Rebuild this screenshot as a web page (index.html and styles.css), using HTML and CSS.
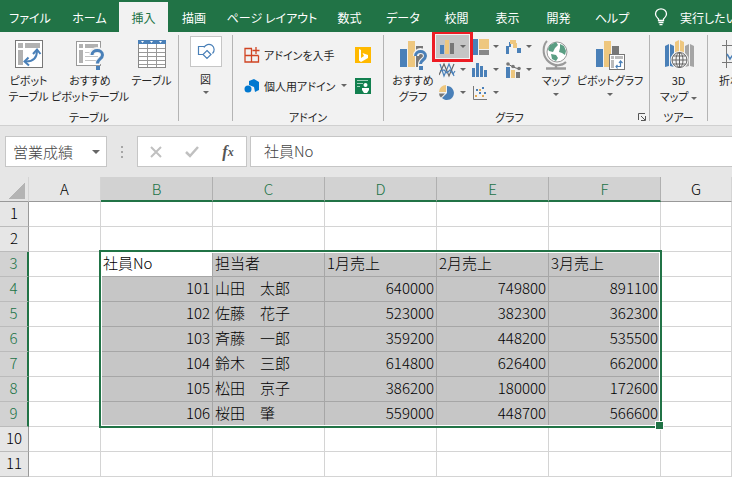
FILE: index.html
```html
<!DOCTYPE html>
<html lang="ja">

<head>
    <meta charset="UTF-8">
    <meta name="viewport" content="width=device-width, initial-scale=1.0">
    <title>営業成績</title>
    <link rel="stylesheet" href="styles.css">
</head>

<body>
    <nav class="tabs">
        <a href="#">ファイル</a>
        <a href="#">ホーム</a>
        <a href="#" class="active">挿入</a>
        <a href="#">描画</a>
        <a href="#">ページ レイアウト</a>
        <a href="#">数式</a>
        <a href="#">データ</a>
        <a href="#">校閲</a>
        <a href="#">表示</a>
        <a href="#">開発</a>
        <a href="#">ヘルプ</a>
        <a href="#" class="tell-me">
            <svg width="14" height="18" viewBox="0 0 14 18" fill="none" stroke="#fff" stroke-width="1.3">
                <path d="M4.5 12.5V11C3 9.500 1.500 8.500 1.500 6a5.500 5.200 0 0 1 11 0C12.500 8.500 11 9.500 9.500 11v1.500zM4.500 14.500h5M5.500 16.700h3" />
            </svg>
            実行したい
        </a>
    </nav>

    <div class="ribbon">
        <div class="group group-tables">
            <div class="tools">
                <button class="big">
                    <svg width="30" height="30" viewBox="0 0 30 30">
                        <rect x="1.500" y=".5" width="27" height="27" fill="#fff" stroke="#777" />
                        <path d="M4 3h5v5H4zM11 3h15v5H11zM4 10h5v15H4z" fill="#b1b1b1" />
                        <path d="M12 21.500c7 0 11-4 11-11" fill="none" stroke="#4a80b8" stroke-width="2" />
                        <path d="M19 14l4-4.500 3.500 4.500M14.500 17.500L10.500 21.500l4.500 4" fill="none" stroke="#4a80b8" stroke-width="2" />
                    </svg>
                    <span>ピボット<br>テーブル</span>
                </button>
                <button class="big wide">
                    <svg width="30" height="30" viewBox="0 0 30 30">
                        <rect x="1.500" y="1.500" width="24" height="24" fill="#fff" stroke="#999" />
                        <path d="M4 4h4v4H4zM10 4h13v4H10zM4 10h4v13H4z" fill="#b1b1b1" />
                        <path d="M10 12.500h13M10 16.500h13M10 20.500h13" stroke="#c4c4c4" />
                        <path d="M17 15c0-7 11-6 11 0 0 4-5 4-5 9" fill="none" stroke="#f2f2f2" stroke-width="6" />
                        <path d="M17 15c0-6 10.500-6 10.500 0 0 4-5 4-5 8.500" fill="none" stroke="#4a80b8" stroke-width="3" />
                        <path d="M21 26h4v4h-4z" fill="#4a80b8" />
                    </svg>
                    <span>おすすめ<br>ピボットテーブル</span>
                </button>
                <button class="big">
                    <svg width="30" height="30" viewBox="0 0 30 30">
                        <rect x="1.500" y=".5" width="27" height="27" fill="#fff" stroke="#888" />
                        <path d="M1 0h28v4H1z" fill="#4a80b8" />
                        <path d="M4 1h3L5.500 3zM13 1h3L14.500 3zM22 1h3L23.500 3z" fill="#fff" />
                        <path d="M2 8.500h26M2 12.500h26M2 16.500h26M2 20.500h26M2 24.500h26M10.500 4v23M19.500 4v23" stroke="#999" />
                    </svg>
                    <span>テーブル</span>
                </button>
            </div>
            <div class="caption">テーブル</div>
        </div>

        <div class="group group-shapes">
            <button class="shapes">
                <span class="shape-box">
                    <svg width="18" height="18" viewBox="0 0 18 18" fill="none" stroke="#4a80b8" stroke-width="1.200">
                        <path d="M8 3.500H1.500v8H6M7 4.500a5.300 5.300 0 1 1 8.500 6M10 7.500l4 4-4 4-4-4z" />
                    </svg>
                </span>
                <span>図</span>
                <i class="caret"></i>
            </button>
        </div>

        <div class="group group-addins">
            <div class="addins">
                <button>
                    <svg width="16" height="16" viewBox="0 0 16 16" fill="none" stroke="#d04423" stroke-width="1.300">
                        <path d="M8 1.500H1V15h13.500V8.500M1 8.500h13.500M7.500 1.500V15M12 0v7M8.500 3.500h7" />
                    </svg>
                    アドインを入手
                </button>
                <button aria-label="Bing">
                    <svg width="16" height="16" viewBox="0 0 16 16">
                        <path d="M0 0h16v16H0z" fill="#ffb900" />
                        <path d="M4 2l2 1v8l3-2-1.500-3L13 8v3l-7 4-2-1.500z" fill="#fff" />
                    </svg>
                </button>
                <button>
                    <svg width="16" height="16" viewBox="0 0 16 16" fill="#0078d0">
                        <path d="M5 3l5-2 5 3v8l-4 2-1-5-5-2z" />
                        <circle cx="4" cy="11" r="3.500" />
                    </svg>
                    個人用アドイン
                    <i class="caret"></i>
                </button>
                <button aria-label="People Graph">
                    <svg width="16" height="16" viewBox="0 0 16 16">
                        <path d="M0 0h16v16H0z" fill="#12804f" />
                        <path d="M2 2.500h11M2 5.500h6M2 8.500h3" stroke="#9fd0b9" />
                        <circle cx="10.500" cy="7" r="2" fill="#fff" />
                        <path d="M7 10h7v2l-2 3H9l-2-3z" fill="#fff" />
                    </svg>
                </button>
            </div>
            <div class="caption">アドイン</div>
        </div>

        <div class="group group-charts">
            <div class="tools">
                <button class="big suggest">
                    <svg width="30" height="30" viewBox="0 0 30 30">
                        <path d="M2 9h7v18H2z" fill="#4a80b8" />
                        <path d="M10 1h7v26h-7z" fill="#eec77f" />
                        <path d="M18 6h7v21h-7z" fill="#777" />
                        <path d="M18 16c0-7 10-6 10 0 0 4-5 4-5 8v6" fill="none" stroke="#f2f2f2" stroke-width="6" />
                        <path d="M17.500 16c0-6 10-6 10 0 0 4-5 4-5 8" fill="none" stroke="#4a80b8" stroke-width="3" />
                        <path d="M21 26h4v4h-4z" fill="#4a80b8" />
                    </svg>
                    <span>おすすめ<br>グラフ</span>
                </button>
                <div class="gallery">
                    <button class="selected" aria-label="縦棒">
                        <svg width="17" height="16" viewBox="0 0 17 16">
                            <path d="M1 6h4v9H1z" fill="#4a80b8" />
                            <path d="M6 1h4v14H6z" fill="#eec77f" />
                            <path d="M11 4h4v11h-4z" fill="#777" />
                        </svg>
                        <i class="caret"></i>
                    </button>
                    <button aria-label="階層構造">
                        <svg width="17" height="16" viewBox="0 0 17 16">
                            <path d="M0 0h6v16H0z" fill="#4a80b8" />
                            <path d="M7 0h10v10H7z" fill="#eec77f" />
                            <path d="M7 11h10v5H7z" fill="#888" />
                        </svg>
                        <i class="caret"></i>
                    </button>
                    <button aria-label="ウォーターフォール">
                        <svg width="17" height="16" viewBox="0 0 17 16">
                            <path d="M1 7h3v8H1zM4 3h2v5H4zM12 9h4v5h-4z" fill="#4a80b8" />
                            <path d="M5 1h6v4H5zM8 4h4v5H8z" fill="#eec77f" />
                        </svg>
                        <i class="caret"></i>
                    </button>
                    <button aria-label="折れ線">
                        <svg width="17" height="16" viewBox="0 0 17 16" fill="none" stroke-width="1.200">
                            <path d="M1 2l4 12 5-12 5 12" stroke="#4a80b8" />
                            <path d="M0 13L5 2l5 12 5-12" stroke="#666" />
                            <path d="M1 9l4-1 3 3 3-3 3 4 2-3" stroke="#4a80b8" />
                        </svg>
                        <i class="caret"></i>
                    </button>
                    <button aria-label="統計">
                        <svg width="17" height="16" viewBox="0 0 17 16" fill="#4a80b8">
                            <path d="M0 6h3v9H0zM4 1h3v14H4zM8 4h3v11H8zM12 8h3v7h-3z" />
                        </svg>
                        <i class="caret"></i>
                    </button>
                    <button aria-label="組み合わせ">
                        <svg width="17" height="16" viewBox="0 0 17 16">
                            <path d="M1 5h4v11H1z" fill="#4a80b8" />
                            <path d="M6 8h4v8H6z" fill="#eec77f" />
                            <path d="M11 10h4v6h-4z" fill="#777" />
                            <path d="M3 2l5 3 6 2" fill="none" stroke="#666" />
                            <g fill="#777"><circle cx="3" cy="2" r="1.800" /><circle cx="8" cy="4.500" r="1.800" /><circle cx="14" cy="6.500" r="1.800" /></g>
                        </svg>
                        <i class="caret"></i>
                    </button>
                    <button aria-label="円">
                        <svg width="17" height="16" viewBox="0 0 17 16">
                            <path d="M8 1v7l-5 5A7 7 0 1 0 8 1" fill="#4a80b8" />
                            <path d="M7 0v7H0A7 7 0 0 1 7 0" fill="#eec77f" />
                            <path d="M0 8.500h6L2 12.500q-2-2-2-4" fill="#777" />
                        </svg>
                        <i class="caret"></i>
                    </button>
                    <button aria-label="散布図">
                        <svg width="17" height="16" viewBox="0 0 17 16">
                            <path d="M1.500 1v13.500H15" fill="none" stroke="#777" />
                            <path d="M4 4h2v2H4zM10 2h2v2h-2zM7 7h2v2H7zM12 7h2v2h-2z" fill="#4a80b8" />
                            <path d="M3 10h2v2H3zM7 4h2v2H7zM10 10h2v2h-2z" fill="#e3a955" />
                        </svg>
                        <i class="caret"></i>
                    </button>
                </div>
                <button class="big map">
                    <svg width="30" height="30" viewBox="0 0 30 30">
                        <path d="M6 1C2 5 1 14 6 20s14 7 19 2" fill="none" stroke="#999" stroke-width="2" />
                        <path d="M15 24v4M5 28.500h20" stroke="#999" stroke-width="2.500" />
                        <circle cx="16" cy="12" r="10" fill="#fff" stroke="#999" />
                        <path d="M9 5l6-3 2 3-3 3-2 4-4-1-1-2zM19 4l4 2 2 5-1 4-3-2-3-1 1-4zM10 14l5 1 2 3-2 3-4-2z" fill="#5a9e83" />
                    </svg>
                    <span>マップ</span>
                    <i class="caret"></i>
                </button>
                <button class="big pivot-chart">
                    <svg width="30" height="30" viewBox="0 0 30 30">
                        <path d="M1 9h7v18H1z" fill="#4a80b8" />
                        <path d="M9 1h7v26H9z" fill="#eec77f" />
                        <path d="M17 6h7v8h-7z" fill="#777" />
                        <rect x="14.500" y="14.500" width="15" height="15" fill="#fff" stroke="#777" />
                        <path d="M16 16h3v3h-3zM20 16h8v3h-8zM16 20h3v8h-3z" fill="#bbb" />
                        <path d="M21 26.500h4.500v-5M24 23l1.500-2 2 2M22.500 25L21 26.500l1.500 2" fill="none" stroke="#4a80b8" stroke-width="1.200" />
                    </svg>
                    <span>ピボットグラフ</span>
                    <i class="caret"></i>
                </button>
            </div>
            <div class="caption">
                グラフ
                <button class="launcher" aria-label="グラフの詳細">
                    <svg width="8" height="8" viewBox="0 0 8 8" fill="none" stroke="#555">
                        <path d="M.5 7V.500H7M3 3l4 4M7.500 3v4.500H3" />
                    </svg>
                </button>
            </div>
        </div>

        <div class="group group-tours">
            <div class="tools">
                <button class="big">
                    <svg width="30" height="30" viewBox="0 0 30 30">
                        <path d="M1 6l4-2v22l-4 1zM6 4l4 2v21l-4-1z" fill="#4a80b8" />
                        <path d="M11 2l4-2v26h-4zM16 0l4 2v24h-4z" fill="#eec77f" />
                        <path d="M21 6l4-2v22l-4 1zM26 4l4 2v21l-4-1z" fill="#a5a5a5" />
                        <circle cx="15.500" cy="20" r="9" fill="#f2f2f2" />
                        <g fill="none" stroke="#666"><circle cx="15.500" cy="20" r="7.500" /><ellipse cx="15.500" cy="20" rx="3.500" ry="7.500" /><path d="M15.500 12v16M8 20h15M9.500 16h12M9.500 24h12" /></g>
                    </svg>
                    <span>3D<br>マップ <i class="caret"></i></span>
                </button>
            </div>
            <div class="caption">ツアー</div>
        </div>

        <div class="group group-sparklines">
            <button class="big">
                <svg width="30" height="30" viewBox="0 0 30 30" fill="none">
                    <path d="M5.500 0v28M1 5.500h29M1 22.500h29" stroke="#777" />
                    <path d="M6 14l3 5 6-9 5 8 6-5" stroke="#4a80b8" stroke-width="1.500" />
                </svg>
                <span>折れ線</span>
            </button>
        </div>
    </div>

    <div class="formula-bar">
        <div class="name-box">
            <input type="text" value="営業成績" aria-label="名前ボックス">
            <button aria-label="名前の一覧"><i class="caret"></i></button>
        </div>
        <div class="dots"><i></i><i></i><i></i></div>
        <div class="formula-buttons">
            <button aria-label="キャンセル">
                <svg width="12" height="12" viewBox="0 0 12 12" stroke="#c0c0c0" stroke-width="2"><path d="M1 1l10 10M11 1L1 11" /></svg>
            </button>
            <button aria-label="入力">
                <svg width="14" height="12" viewBox="0 0 14 12" fill="none" stroke="#c0c0c0" stroke-width="2.500"><path d="M1 6l4 4 8-9" /></svg>
            </button>
            <button class="fx" aria-label="関数の挿入">f<small>x</small></button>
        </div>
        <input type="text" class="formula" value="社員No" aria-label="数式バー">
    </div>

    <main class="sheet">
        <table>
            <colgroup>
                <col class="col-num">
                <col class="col-a">
                <col class="col-data" span="5">
                <col>
            </colgroup>
            <thead>
                <tr>
                    <th class="corner"></th>
                    <th>A</th>
                    <th class="on">B</th>
                    <th class="on">C</th>
                    <th class="on">D</th>
                    <th class="on">E</th>
                    <th class="on">F</th>
                    <th>G</th>
                </tr>
            </thead>
            <tbody>
                <tr><th>1</th><td></td><td></td><td></td><td></td><td></td><td></td><td></td></tr>
                <tr><th>2</th><td></td><td></td><td></td><td></td><td></td><td></td><td></td></tr>
                <tr class="picked titles"><th>3</th><td></td><td class="current">社員No</td><td>担当者</td><td>1月売上</td><td>2月売上</td><td>3月売上</td><td></td></tr>
                <tr class="picked"><th>4</th><td></td><td>101</td><td>山田　太郎</td><td>640000</td><td>749800</td><td>891100</td><td></td></tr>
                <tr class="picked"><th>5</th><td></td><td>102</td><td>佐藤　花子</td><td>523000</td><td>382300</td><td>362300</td><td></td></tr>
                <tr class="picked"><th>6</th><td></td><td>103</td><td>斉藤　一郎</td><td>359200</td><td>448200</td><td>535500</td><td></td></tr>
                <tr class="picked"><th>7</th><td></td><td>104</td><td>鈴木　三郎</td><td>614800</td><td>626400</td><td>662000</td><td></td></tr>
                <tr class="picked"><th>8</th><td></td><td>105</td><td>松田　京子</td><td>386200</td><td>180000</td><td>172600</td><td></td></tr>
                <tr class="picked"><th>9</th><td></td><td>106</td><td>桜田　肇</td><td>559000</td><td>448700</td><td>566600</td><td></td></tr>
                <tr><th>10</th><td></td><td></td><td></td><td></td><td></td><td></td><td></td></tr>
                <tr><th>11</th><td></td><td></td><td></td><td></td><td></td><td></td><td></td></tr>
            </tbody>
        </table>
        <div class="selection"></div>
    </main>
</body>

</html>
```
FILE: styles.css
```css
* {
    box-sizing: border-box;
}

body {
    margin: 0;
    min-height: 100vh;
    display: flex;
    flex-direction: column;
    overflow: hidden;
    background: #fff;
    color: #262626;
    font-family: "Noto Sans CJK JP", sans-serif;
    font-size: 12px;
}

button,
input {
    margin: 0;
    padding: 0;
    border: none;
    background: none;
    color: inherit;
    font: inherit;
}

svg {
    display: block;
    flex: none;
}

.caret {
    display: inline-block;
    flex: none;
    border: 3px solid transparent;
    border-top-color: #666;
    border-bottom: none;
}

/* tabs */
.tabs {
    display: grid;
    grid-template-columns: 60px 59px 49px 52px 104px 51px 56px 51px 51px 51px 56px 1fr;
    height: 32px;
    padding-top: 2px;
    overflow: hidden;
    background: #217346;
    font-feature-settings: "palt";
}

.tabs a {
    display: flex;
    align-items: center;
    justify-content: center;
    color: #fff;
    text-decoration: none;
    white-space: nowrap;
}

.tabs .active {
    background: #f2f2f2;
    color: #217346;
}

.tabs .tell-me {
    justify-content: flex-start;
    gap: 12px;
    padding-left: 14px;
}

/* ribbon */
.ribbon {
    display: flex;
    height: 94px;
    padding: 3px 0 4px;
    overflow: hidden;
    background: #f2f2f2;
    border-bottom: 1px solid #d0d0d0;
    font-size: 11px;
    font-feature-settings: "palt";
}

.group {
    display: flex;
    flex: none;
    flex-direction: column;
    justify-content: space-between;
    border-right: 1px solid #b4b4b4;
}

.group-tables {
    width: 179px;
}

.group-shapes {
    width: 54px;
}

.group-addins {
    width: 151px;
}

.group-charts {
    width: 266px;
    padding-left: 6px;
}

.group-tours {
    width: 58px;
}

.group-sparklines {
    flex: 1 0 24px;
    padding-left: 11px;
    border: none;
}

.tools {
    display: flex;
}

.big {
    display: flex;
    flex: none;
    flex-direction: column;
    align-items: center;
    gap: 2px;
    width: 57px;
    padding-top: 5px;
    line-height: 16px;
    white-space: nowrap;
}

.big.wide {
    width: 66px;
}

.big.suggest {
    width: 46px;
}

.big.map {
    width: 42px;
}

.big.pivot-chart {
    width: 66px;
}

.big .caret {
    margin-top: 3px;
}

.big span .caret {
    margin-top: 0;
    vertical-align: middle;
}

.group-sparklines .big {
    width: auto;
    align-self: flex-start;
}

.caption {
    position: relative;
    height: 12px;
    line-height: 16px;
    text-align: center;
}

.group-charts .caption {
    padding-right: 20px;
}

.launcher {
    position: absolute;
    right: 3px;
    bottom: 0;
}

.shapes {
    display: flex;
    flex-direction: column;
    align-items: center;
    gap: 4px;
    padding-top: 1px;
    line-height: 16px;
}

.shape-box {
    display: flex;
    align-items: center;
    justify-content: center;
    width: 32px;
    height: 31px;
    background: #fff;
    border: 1px solid #c6c6c6;
}

.addins {
    display: grid;
    grid-template-columns: 1fr 28px;
    grid-auto-rows: 31px;
    padding: 4px 0 0 11px;
}

.addins button {
    display: flex;
    align-items: center;
    gap: 4px;
    white-space: nowrap;
}

.addins .caret {
    margin-left: auto;
    margin-right: 8px;
}

.gallery {
    display: grid;
    flex: none;
    grid-template-columns: repeat(3, 33px);
    grid-auto-rows: 23px;
}

.gallery button {
    display: flex;
    align-items: center;
    justify-content: center;
    gap: 4px;
}

.gallery .selected {
    position: relative;
    background: #c5c5c5;
}

.gallery .selected::after {
    content: "";
    position: absolute;
    inset: -4px;
    border: 3px solid #ed1c24;
}

/* formula bar */
.formula-bar {
    display: flex;
    height: 51px;
    padding: 10px 0;
    background: #e6e6e6;
    color: #444;
    font-size: 15px;
    font-weight: 300;
}

.name-box,
.formula-buttons,
.formula {
    height: 31px;
    background: #fff;
    border: 1px solid #c6c6c6;
}

.name-box {
    display: flex;
    width: 102px;
    margin-left: 5px;
}

.name-box input {
    flex: 1;
    min-width: 0;
    padding-left: 7px;
}

.name-box button {
    display: flex;
    align-items: center;
    padding: 0 6px;
}

.name-box .caret {
    border-width: 4px;
    border-bottom: none;
}

.dots {
    display: flex;
    flex-direction: column;
    align-items: center;
    justify-content: center;
    gap: 3px;
    width: 30px;
}

.dots i {
    width: 2px;
    height: 2px;
    background: #a6a6a6;
}

.formula-buttons {
    display: grid;
    grid-template-columns: repeat(3, 36px);
    width: 110px;
    margin-right: 3px;
}

.formula-buttons button {
    display: flex;
    align-items: center;
    justify-content: center;
}

.formula-buttons .fx {
    color: #555;
    font: italic bold 16px "Liberation Serif", serif;
}

.fx small {
    padding-top: 2px;
    font-size: 12px;
}

.formula {
    flex: 1;
    min-width: 0;
    padding: 0 0 2px 13px;
    border-right: none;
}

/* sheet */
.sheet {
    position: relative;
    flex: 1;
    overflow: hidden;
}

table {
    width: 100%;
    min-width: 720px;
    table-layout: fixed;
    border-collapse: separate;
    border-spacing: 0;
    color: #000;
    font-size: 15px;
    font-weight: 300;
    line-height: 22px;
}

.col-num {
    width: 29px;
}

.col-a {
    width: 72px;
}

.col-data {
    width: 112px;
}

th,
td {
    height: 25px;
    padding: 0 2px 2px;
    border-right: 1px solid #d4d4d4;
    border-bottom: 1px solid #d4d4d4;
    text-align: right;
    white-space: nowrap;
}

th {
    padding: 0 0 2px;
    background: #e6e6e6;
    font-weight: 300;
    text-align: center;
}

thead th {
    padding: 0;
    border-bottom-color: #999;
}

tbody th {
    border-right-color: #999;
    border-bottom-color: #bbb;
}

.corner {
    background: linear-gradient(135deg, #e6e6e6 50%, #b4b4b4 50%) 8px 5px / 17px 17px no-repeat #e6e6e6;
}

thead .on {
    background: #d2d2d2;
    border-right-color: #b0b0b0;
    border-bottom: 2px solid #217346;
    color: #217346;
}

.picked th {
    background: #d2d2d2;
    border-right: 2px solid #217346;
    color: #217346;
}

.picked td:nth-child(n+3):nth-child(-n+7) {
    background: #c6c6c6;
    border-color: #a6a6a6;
}

.picked td:nth-child(4),
.titles td {
    text-align: left;
}

.picked td.current:nth-child(3) {
    background: #fff;
}

/* outline of the range B3:F9 with the fill handle in its corner */
.selection {
    position: absolute;
    left: 99px;
    top: 73px;
    width: 563px;
    height: 178px;
    border: 2px solid #217346;
    box-shadow: inset 0 0 0 1px #fff;
}

.selection::after {
    content: "";
    position: absolute;
    right: -4px;
    bottom: -4px;
    width: 7px;
    height: 7px;
    background: #217346;
    border: 1px solid #fff;
}
```
